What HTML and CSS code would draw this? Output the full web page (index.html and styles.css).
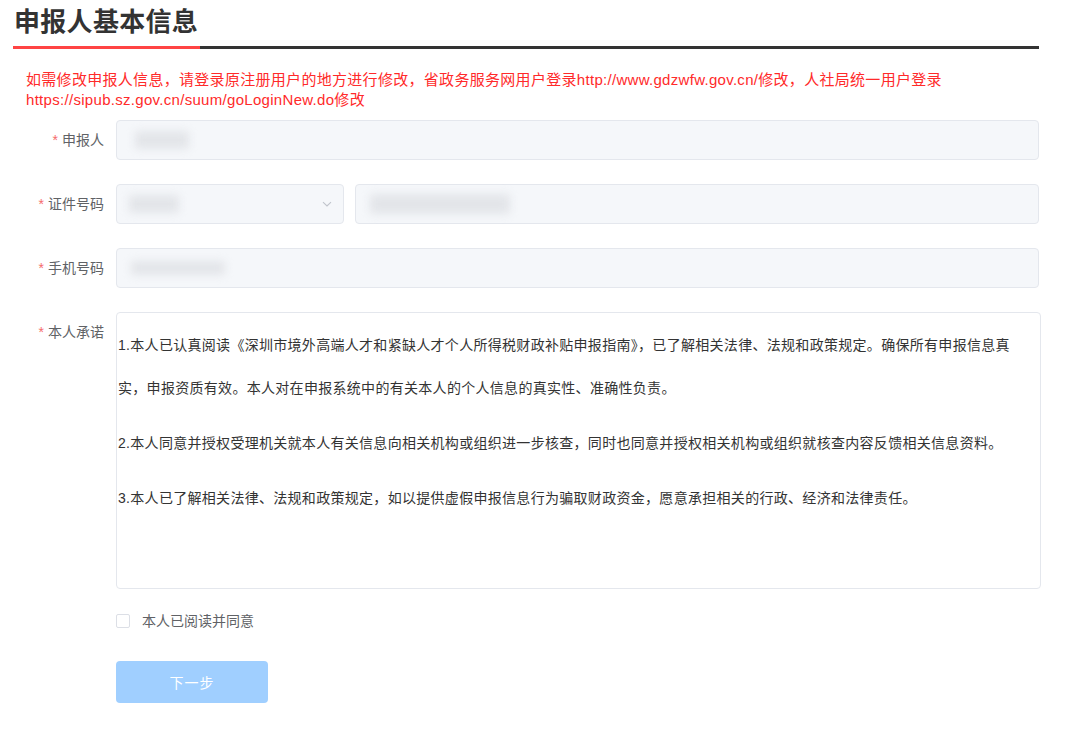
FILE: index.html
```html
<!DOCTYPE html>
<html lang="zh-CN">
<head>
  <meta charset="UTF-8">
  <title>申报人基本信息</title>
  <link rel="stylesheet" href="styles.css">
</head>
<body>
  <div class="page">
    <div class="page-head">
      <h1>申报人基本信息</h1>
      <div class="head-bar"><span class="bar-red"></span><span class="bar-dark"></span></div>
    </div>

    <p class="notice">如需修改申报人信息，请登录原注册用户的地方进行修改，省政务服务网用户登录http://www.gdzwfw.gov.cn/修改，人社局统一用户登录 https://sipub.sz.gov.cn/suum/goLoginNew.do修改</p>

    <form class="form">
      <div class="form-item">
        <label class="item-label"><i>*</i>申报人</label>
        <div class="item-body">
          <div class="input is-disabled"><span class="blur blur-name"></span></div>
        </div>
      </div>

      <div class="form-item">
        <label class="item-label"><i>*</i>证件号码</label>
        <div class="item-body split">
          <div class="input select is-disabled">
            <span class="blur blur-type"></span>
            <svg class="arrow" width="12" height="12" viewBox="0 0 12 12"><path d="M2 4.2 6 8l4-3.8" fill="none" stroke="#c0c4cc" stroke-width="1.1"/></svg>
          </div>
          <div class="input is-disabled grow"><span class="blur blur-id"></span></div>
        </div>
      </div>

      <div class="form-item">
        <label class="item-label"><i>*</i>手机号码</label>
        <div class="item-body">
          <div class="input is-disabled"><span class="blur blur-phone"></span></div>
        </div>
      </div>

      <div class="form-item">
        <label class="item-label"><i>*</i>本人承诺</label>
        <div class="item-body">
          <div class="promise">
            <p>1.本人已认真阅读《深圳市境外高端人才和紧缺人才个人所得税财政补贴申报指南》，已了解相关法律、法规和政策规定。确保所有申报信息真实，申报资质有效。本人对在申报系统中的有关本人的个人信息的真实性、准确性负责。</p>
            <p>2.本人同意并授权受理机关就本人有关信息向相关机构或组织进一步核查，同时也同意并授权相关机构或组织就核查内容反馈相关信息资料。</p>
            <p>3.本人已了解相关法律、法规和政策规定，如以提供虚假申报信息行为骗取财政资金，愿意承担相关的行政、经济和法律责任。</p>
          </div>
        </div>
      </div>

      <div class="form-item agree-row">
        <div class="item-body">
          <label class="checkbox"><span class="box"></span>本人已阅读并同意</label>
        </div>
      </div>

      <div class="form-item">
        <div class="item-body">
          <button type="button" class="btn-next" disabled>下一步</button>
        </div>
      </div>
    </form>
  </div>
</body>
</html>
```

FILE: styles.css
```css
body {
  margin: 0;
  background: #fff;
  font-family: "Liberation Sans", Arial, "Noto Sans CJK SC", sans-serif;
  color: #606266;
}
.page {
  width: 1026px;
  padding-left: 13px;
}
.page-head h1 {
  margin: 0;
  padding-left: 1px;
  font-size: 26px;
  line-height: 44px;
  font-weight: bold;
  color: #333;
  letter-spacing: 0.3px;
}
.head-bar {
  display: flex;
  height: 3px;
  margin-top: 2px;
}
.bar-red {
  width: 187px;
  background: #f44;
}
.bar-dark {
  flex: 1;
  background: #333;
}
.notice {
  margin: 21px 0 0;
  padding-left: 13px;
  padding-right: 80px;
  font-size: 15px;
  line-height: 20px;
  letter-spacing: 0.3px;
  color: #ff2a2a;
}
.form {
  margin-top: 10px;
}
.form-item {
  display: flex;
  margin-bottom: 24px;
}
.item-label {
  width: 91px;
  padding-right: 12px;
  text-align: right;
  font-size: 14px;
  line-height: 40px;
  color: #606266;
  flex-shrink: 0;
}
.item-label i {
  font-style: normal;
  color: #f56c6c;
  margin-right: 4px;
}
.item-body {
  flex: 1;
}
.agree-row .item-body,
.form-item .item-body:only-child {
  margin-left: 103px;
}
.split {
  display: flex;
  gap: 11px;
}
.input {
  height: 38px;
  border: 1px solid #e4e7ed;
  border-radius: 4px;
  background: #f5f7fa;
  display: flex;
  align-items: center;
  padding: 0 14px;
  box-sizing: content-box;
}
.select {
  width: 204px;
  flex-shrink: 0;
  justify-content: space-between;
  padding: 0 10px 0 12px;
}
.grow {
  flex: 1;
}
.arrow {
  display: block;
}
.blur {
  display: block;
  height: 18px;
  background: #e3e5e9;
  filter: blur(4px);
  border-radius: 3px;
}
.blur-name { width: 54px; margin-left: 4px; }
.blur-type { width: 50px; }
.blur-id { width: 140px; height: 20px; }
.blur-phone { width: 94px; height: 14px; }
.promise {
  height: 264px;
  border: 1px solid #e4e7ed;
  border-radius: 4px;
  margin-right: -2px;
  padding: 11px 18px 0 1px;
  font-size: 14px;
  letter-spacing: 0.3px;
  line-height: 43px;
  color: #333;
  overflow: hidden;
}
.promise p {
  margin: 0 0 12px;
}
.agree-row {
  margin-top: -2px;
  margin-bottom: 30px;
}
.checkbox {
  display: flex;
  align-items: center;
  font-size: 14px;
  line-height: 20px;
  color: #606266;
}
.box {
  width: 12px;
  height: 12px;
  border: 1px solid #dcdfe6;
  border-radius: 2px;
  margin-right: 12px;
  background: #fff;
}
.btn-next {
  width: 152px;
  height: 42px;
  border: none;
  border-radius: 4px;
  background: #a0cfff;
  color: #fff;
  font-size: 14px;
  font-family: inherit;
  letter-spacing: 1px;
}
```
